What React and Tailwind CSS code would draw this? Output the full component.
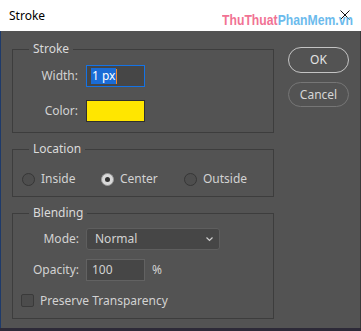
import React from 'react';

const font = { fontFamily: '"Noto Sans", "Liberation Sans", sans-serif' };

function Group({ title, className, children }) {
  return (
    <fieldset className={`border border-[#3d3d3d] ${className}`}>
      <legend className="ml-4 px-1 h-4 leading-4 text-[12px] text-[#dadada]">{title}</legend>
      {children}
    </fieldset>
  );
}

function Radio({ checked }) {
  return checked ? (
    <span className="flex items-center justify-center w-[13px] h-[13px] rounded-full bg-[#d9d9d9] border border-[#9a9a9a]">
      <span className="w-[5px] h-[5px] rounded-full bg-[#333]" />
    </span>
  ) : (
    <span className="w-[13px] h-[13px] rounded-full border border-[#363636] bg-[#4e4e4e]" />
  );
}

export default function App() {
  return (
    <div style={font} className="w-[361px] h-[331px] flex flex-col bg-[#2d2a38] overflow-hidden select-none">
      {/* Title bar */}
      <div className="relative h-[31px] bg-white flex items-center pl-[9px] text-[12px] text-black">
        <span>Stroke</span>
        <svg className="absolute left-[340px] top-[10px]" width="10" height="10" viewBox="0 0 10 10">
          <path d="M0.5 0.5 L9.5 9.5 M9.5 0.5 L0.5 9.5" stroke="#111" strokeWidth="1" />
        </svg>
        {/* watermark */}
        <svg className="absolute left-[221px] top-[9px] opacity-85" width="134" height="20" viewBox="0 0 134 20">
          <text
            x="1"
            y="16"
            textLength="131"
            lengthAdjust="spacingAndGlyphs"
            fontFamily="Liberation Sans, Arial, sans-serif"
            fontWeight="bold"
            fontSize="15"
          >
            <tspan fill="#ef5a82">ThuThuat</tspan>
            <tspan fill="#52b0ea">PhanMem.vn</tspan>
          </text>
        </svg>
      </div>

      {/* Body */}
      <div className="h-[297px] bg-[#535353] border-l border-l-[#1e3a6a] border-r border-r-[#3a3a3a] flex text-[12px] text-[#d2d2d2]">
        <div className="pl-[11px] pt-[10px] w-[273px] flex flex-col gap-[8px]">
          <Group title="Stroke" className="h-[92px] pt-[8px]">
            <div className="flex items-center h-[22px]">
              <span className="w-[65px] text-right">Width:</span>
              <div className="ml-[8px] w-[59px] h-[22px] bg-[#464646] border border-[#1473e6] flex items-center pl-[4px]">
                <span className="bg-[#1a6cd6] text-white leading-[16px] px-[1px]">1 px</span>
                <span className="w-[1px] h-[15px] bg-[#f08a30]" />
              </div>
            </div>
            <div className="flex items-center h-[22px] mt-[13px]">
              <span className="w-[65px] text-right">Color:</span>
              <div className="ml-[8px] w-[59px] h-[22px] bg-[#ffe600] border border-[#2f2f2f]" />
            </div>
          </Group>

          <Group title="Location" className="h-[56px] pt-[15px]">
            <div className="flex items-center h-[14px] pl-[9px]">
              <div className="w-[79px] flex items-center gap-[6px]">
                <Radio />
                <span>Inside</span>
              </div>
              <div className="w-[83px] flex items-center gap-[6px]">
                <Radio checked />
                <span>Center</span>
              </div>
              <div className="flex items-center gap-[6px]">
                <Radio />
                <span>Outside</span>
              </div>
            </div>
          </Group>

          <Group title="Blending" className="h-[114px] pt-[7px]">
            <div className="flex items-center h-[22px]">
              <span className="w-[66px] text-right">Mode:</span>
              <div className="ml-[7px] w-[134px] h-[22px] bg-[#464646] border border-[#5e5e5e] rounded-[3px] flex items-center justify-between pl-[8px] pr-[6px]">
                <span>Normal</span>
                <svg width="7" height="5" viewBox="0 0 7 5">
                  <path d="M0.5 0.5 L3.5 3.5 L6.5 0.5" fill="none" stroke="#cfcfcf" strokeWidth="1.2" />
                </svg>
              </div>
            </div>
            <div className="flex items-center h-[22px] mt-[9px]">
              <span className="w-[66px] text-right">Opacity:</span>
              <div className="ml-[7px] w-[59px] h-[22px] bg-[#464646] border border-[#626262] flex items-center pl-[5px]">
                100
              </div>
              <span className="ml-[7px]">%</span>
            </div>
            <div className="flex items-center h-[13px] mt-[13px] pl-[8px] gap-[6px]">
              <span className="w-[13px] h-[13px] rounded-[2px] border border-[#3a3a3a] bg-[#4c4c4c]" />
              <span>Preserve Transparency</span>
            </div>
          </Group>
        </div>

        <div className="pl-[14px] pt-[16px] flex flex-col gap-[9px]">
          <button className="w-[61px] h-[26px] rounded-full border-[1.5px] border-[#c4c4c4] text-[#e4e4e4] text-[12px]">
            OK
          </button>
          <button className="w-[61px] h-[25px] rounded-full border border-[#767676] text-[#d6d6d6] text-[12px]">
            Cancel
          </button>
        </div>
      </div>
    </div>
  );
}
